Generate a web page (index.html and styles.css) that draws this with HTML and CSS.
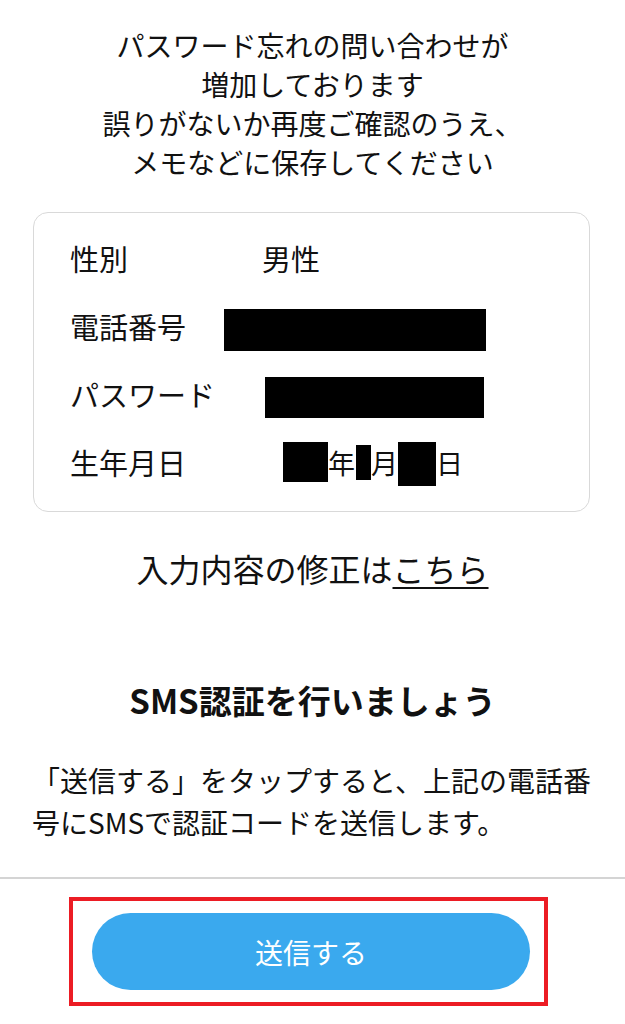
FILE: index.html
```html
<!DOCTYPE html>
<html lang="ja">
<head>
<meta charset="utf-8">
<title>SMS認証</title>
<link rel="stylesheet" href="styles.css">
</head>
<body>
<main class="page">
  <p class="notice">パスワード忘れの問い合わせが<br>増加しております<br>誤りがないか再度ご確認のうえ、<br>メモなどに保存してください</p>

  <section class="card">
    <div class="row">
      <span class="label">性別</span>
      <span class="value value-gender">男性</span>
    </div>
    <div class="row">
      <span class="label">電話番号</span>
      <span class="value"><span class="redact redact-phone"></span></span>
    </div>
    <div class="row">
      <span class="label">パスワード</span>
      <span class="value value-pass"><span class="redact redact-pass"></span></span>
    </div>
    <div class="row">
      <span class="label">生年月日</span>
      <span class="value value-date"><span class="redact redact-y"></span>年<span class="redact redact-m"></span>月<span class="redact redact-d"></span>日</span>
    </div>
  </section>

  <p class="edit">入力内容の修正は<a class="edit-link" href="#">こちら</a></p>

  <h2 class="sms-title">SMS認証を行いましょう</h2>

  <p class="sms-desc">「送信する」をタップすると、上記の電話番号にSMSで認証コードを送信します。</p>

  <hr class="divider">

  <div class="highlight">
    <button class="send-btn" type="button">送信する</button>
  </div>
</main>
</body>
</html>
```

FILE: styles.css
```css
html, body {
  margin: 0;
  padding: 0;
  background: #ffffff;
}

body {
  font-family: "Noto Sans CJK JP", "Noto Sans", sans-serif;
  color: #111111;
  width: 625px;
  height: 1024px;
  overflow: hidden;
}

.page {
  display: flex;
  flex-direction: column;
}

.notice {
  margin: 0;
  padding-top: 26px;
  font-size: 28px;
  line-height: 39px;
  text-align: center;
}

.card {
  margin: 30px 0 0 33px;
  width: 557px;
  height: 300px;
  box-sizing: border-box;
  border: 1.5px solid #d9d9d9;
  border-radius: 15px;
  padding: 11px 0 0 36px;
  display: flex;
  flex-direction: column;
}

.row {
  display: flex;
  align-items: center;
  height: 68px;
  font-size: 29px;
}

.label {
  width: 154px;
  flex: none;
}

.value {
  display: inline-flex;
  align-items: center;
}

.value-gender { margin-left: 38px; }
.value-pass { margin-left: 41px; }
.value-date { margin-left: 59px; font-size: 27px; }

.redact {
  display: inline-block;
  background: #000000;
}

.redact-phone { width: 262px; height: 42px; margin-top: 7px; }
.redact-pass { width: 219px; height: 41px; margin-top: 7px; }
.redact-y { width: 45px; height: 40px; }
.redact-m { width: 15px; height: 35px; margin-left: 1px; }
.redact-d { width: 38px; height: 44px; margin-top: 4px; }

.edit {
  margin: 36px 0 0;
  font-size: 32px;
  line-height: 40px;
  text-align: center;
}

.edit-link {
  color: #111111;
  text-decoration: underline;
  text-decoration-thickness: 2px;
  text-underline-offset: 5px;
}

.sms-title {
  margin: 92px 0 0;
  font-size: 33px;
  line-height: 40px;
  font-weight: 700;
  text-align: center;
}

.sms-desc {
  margin: 39px 0 0;
  padding: 0 20px 0 32px;
  font-size: 28px;
  line-height: 42px;
}

.divider {
  margin: 34px 0 0;
  border: none;
  height: 2px;
  background: #d4d4d4;
}

.highlight {
  margin: 18px 0 0 69px;
  width: 479px;
  height: 109px;
  box-sizing: border-box;
  border: 4px solid #ec1c24;
  padding: 12px 0 0 19px;
}

.send-btn {
  display: flex;
  align-items: center;
  justify-content: center;
  width: 438px;
  height: 77px;
  border: none;
  border-radius: 39px;
  background: #3aa9ee;
  color: #ffffff;
  font-family: "Noto Sans CJK JP", "Noto Sans", sans-serif;
  font-size: 28px;
  padding: 0;
}
```
